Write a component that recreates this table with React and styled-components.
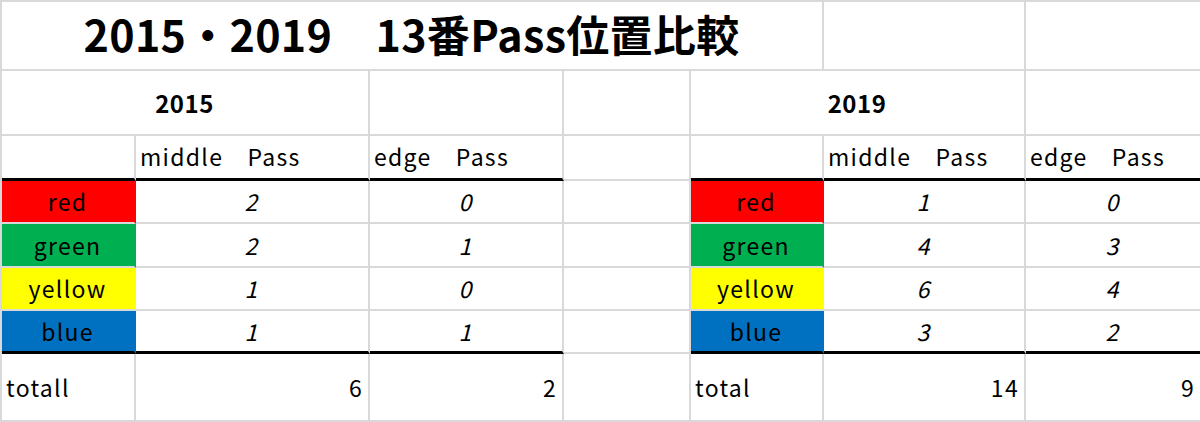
import React from 'react';
import styled, { createGlobalStyle } from 'styled-components';

const Global = createGlobalStyle`
  html, body { margin: 0; padding: 0; background: #fff; overflow: hidden; }
  body { font-family: "Noto Sans CJK JP", "Noto Sans", sans-serif; color: #000; }
`;

const GRID = '#d9d9d9';

const Sheet = styled.div`
  display: grid;
  grid-template-columns: 134px 234px 194px 127px 133px 202px 176px;
  grid-template-rows: 69px 65px 45px 43px 44px 43px 43px 68px;
  width: 1202px;
  border-top: 2px solid ${GRID};
  border-left: 2px solid ${GRID};
`;

const Cell = styled.div`
  box-sizing: border-box;
  grid-column: span ${(p) => p.$span || 1};
  display: flex;
  align-items: center;
  justify-content: center;
  padding: 0 5px 0 4px;
  background: ${(p) => p.$bg || '#fff'};
  border-right: 2px solid ${(p) => p.$bg || GRID};
  border-bottom: ${(p) => (p.$rule ? '3px solid #000' : `2px solid ${GRID}`)};
  font-size: 23px;
  letter-spacing: 1.3px;
  line-height: 1;
  white-space: pre;
`;

const TitleCell = styled(Cell)`
  font-size: 43px;
  font-weight: 700;
  letter-spacing: 0.3px;
  padding-bottom: 5px;
`;

const YearCell = styled(Cell)`
  font-size: 24px;
  font-weight: 700;
  letter-spacing: 0.5px;
`;

const HeadCell = styled(Cell)`
  justify-content: flex-start;
  padding-bottom: 2px;
`;

const LabelCell = styled(Cell)``;

const ValueCell = styled(Cell)`
  font-style: italic;
`;

const TotalLabel = styled(Cell)`
  justify-content: flex-start;
`;

const TotalValue = styled(Cell)`
  justify-content: flex-end;
`;

const COLORS = {
  red: '#FF0000',
  green: '#00B050',
  yellow: '#FFFF00',
  blue: '#0070C0',
};

const rows = [
  { label: 'red', l: [2, 0], r: [1, 0] },
  { label: 'green', l: [2, 1], r: [4, 3] },
  { label: 'yellow', l: [1, 0], r: [6, 4] },
  { label: 'blue', l: [1, 1], r: [3, 2] },
];

export default function App() {
  return (
    <>
      <Global />
      <Sheet>
        <TitleCell $span={5}>2015・2019　13番Pass位置比較</TitleCell>
        <Cell />
        <Cell />

        <YearCell $span={2}>2015</YearCell>
        <Cell />
        <Cell />
        <YearCell $span={2}>2019</YearCell>
        <Cell />

        <Cell $rule />
        <HeadCell $rule>middle　Pass</HeadCell>
        <HeadCell $rule>edge　Pass</HeadCell>
        <Cell />
        <Cell $rule />
        <HeadCell $rule>middle　Pass</HeadCell>
        <HeadCell $rule>edge　Pass</HeadCell>

        {rows.map((row, i) => {
          const last = i === rows.length - 1;
          return (
            <React.Fragment key={row.label}>
              <LabelCell $bg={COLORS[row.label]} $rule={last}>{row.label}</LabelCell>
              <ValueCell $rule={last}>{row.l[0]}</ValueCell>
              <ValueCell $rule={last}>{row.l[1]}</ValueCell>
              <Cell />
              <LabelCell $bg={COLORS[row.label]} $rule={last}>{row.label}</LabelCell>
              <ValueCell $rule={last}>{row.r[0]}</ValueCell>
              <ValueCell $rule={last}>{row.r[1]}</ValueCell>
            </React.Fragment>
          );
        })}

        <TotalLabel>totall</TotalLabel>
        <TotalValue>6</TotalValue>
        <TotalValue>2</TotalValue>
        <Cell />
        <TotalLabel>total</TotalLabel>
        <TotalValue>14</TotalValue>
        <TotalValue>9</TotalValue>
      </Sheet>
    </>
  );
}
